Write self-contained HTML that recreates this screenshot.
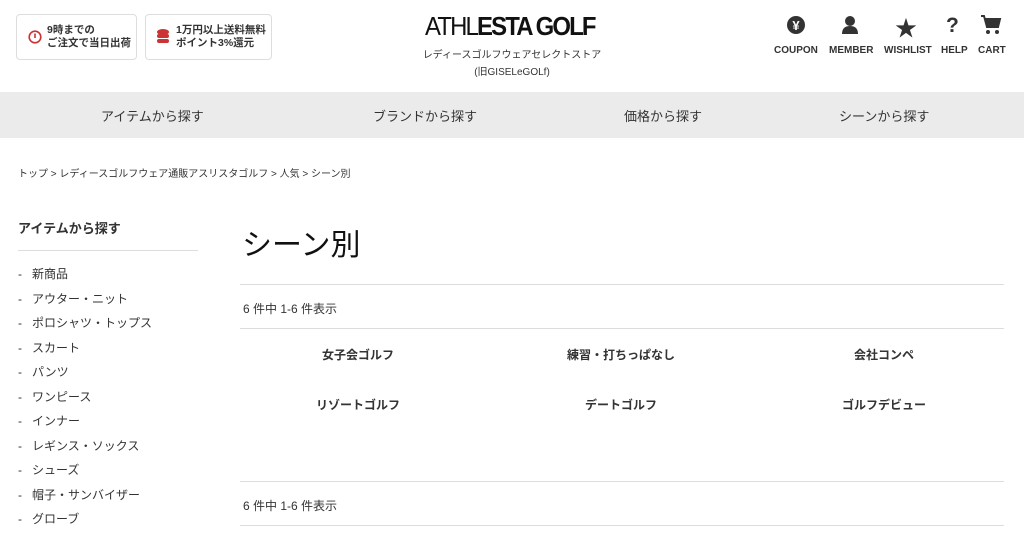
<!DOCTYPE html>
<html><head><meta charset="utf-8"><style>
*{margin:0;padding:0;box-sizing:border-box}
body{width:1024px;height:535px;overflow:hidden;background:#fff;font-family:"Liberation Sans","Noto Sans CJK JP",sans-serif;color:#333;position:relative}
.a{position:absolute}
.box{position:absolute;top:14px;height:46px;border:1px solid #ddd;border-radius:4px;font-size:10.5px;line-height:13px;color:#333;font-weight:bold}
.box .t{position:absolute;left:30px;top:9px}
.icn{position:absolute;font-size:10px;font-weight:bold;color:#333;text-align:center}
nav{position:absolute;top:92px;left:0;width:1024px;height:46px;background:#ebebeb}
nav span{position:absolute;top:14px;font-size:13px;color:#333}
.side li{list-style:none;position:absolute;left:18px;font-size:12px;color:#333}
.line{position:absolute;height:1px;background:#ddd}
.sc{position:absolute;font-size:12px;font-weight:bold;color:#333;width:200px;text-align:center}
</style></head><body>
<div class="box" style="left:16px;width:121px">
<svg class="a" style="left:11px;top:15px" width="14" height="14" viewBox="0 0 14 14"><circle cx="7" cy="7" r="5.8" fill="none" stroke="#c33" stroke-width="1.6"/><rect x="6.2" y="3.5" width="1.6" height="4.5" fill="#c33"/></svg>
<div class="t">9時までの<br>ご注文で当日出荷</div></div>
<div class="box" style="left:145px;width:127px">
<svg class="a" style="left:10px;top:13px" width="14" height="18" viewBox="0 0 14 18"><ellipse cx="7" cy="4" rx="6" ry="3" fill="#c33"/><rect x="1" y="6" width="12" height="4" rx="2" fill="#c33"/><rect x="1" y="11" width="12" height="4" rx="2" fill="#c33"/></svg>
<div class="t">1万円以上送料無料<br>ポイント3%還元</div></div>
<div class="a" style="left:425px;top:11px;font-size:26px;letter-spacing:-2px;color:#111;transform:scaleX(0.92);transform-origin:left top;white-space:nowrap"><span style="font-weight:300">ATHL</span><span style="font-weight:bold">ESTA GOLF</span></div>
<div class="a" style="left:380px;top:47px;width:264px;text-align:center;font-size:10px;line-height:17px;color:#333">レディースゴルフウェアセレクトストア<br>(旧GISELeGOLf)</div>
<svg class="a" style="left:786px;top:15px" width="20" height="20" viewBox="0 0 20 20"><circle cx="10" cy="10" r="9" fill="#333"/><text x="10" y="15" font-size="13" font-weight="bold" fill="#fff" text-anchor="middle">¥</text></svg>
<svg class="a" style="left:841px;top:15px" width="18" height="20" viewBox="0 0 18 20"><circle cx="9" cy="6" r="5" fill="#333"/><path d="M1 19 Q1 11 9 11 Q17 11 17 19Z" fill="#333"/></svg>
<div class="a" style="left:895px;top:11px;font-size:22px;color:#333">★</div>
<div class="a" style="left:946px;top:14px;font-size:21px;font-weight:bold;color:#333">?</div>
<svg class="a" style="left:980px;top:14px" width="22" height="22" viewBox="0 0 22 22"><path d="M1 2h3l3 11h11l2-8H5" fill="none" stroke="#333" stroke-width="2"/><rect x="6" y="5" width="13" height="8" fill="#333"/><circle cx="8" cy="18" r="2" fill="#333"/><circle cx="17" cy="18" r="2" fill="#333"/></svg>
<div class="icn" style="left:774px;top:45px">COUPON</div>
<div class="icn" style="left:829px;top:45px">MEMBER</div>
<div class="icn" style="left:884px;top:45px">WISHLIST</div>
<div class="icn" style="left:941px;top:45px">HELP</div>
<div class="icn" style="left:978px;top:45px">CART</div>
<nav><span style="left:101px">アイテムから探す</span><span style="left:373px">ブランドから探す</span><span style="left:624px">価格から探す</span><span style="left:839px">シーンから探す</span></nav>
<div class="a" style="left:18px;top:165px;font-size:10px;color:#333">トップ &gt; レディースゴルフウェア通販アスリスタゴルフ &gt; 人気 &gt; シーン別</div>
<div class="a" style="left:18px;top:218px;font-size:13px;font-weight:bold;color:#333">アイテムから探す</div>
<div class="line" style="left:18px;top:250px;width:180px"></div>
<ul class="side">
<li style="top:265px">-&nbsp;&nbsp; 新商品</li><li style="top:290px">-&nbsp;&nbsp; アウター・ニット</li><li style="top:314px">-&nbsp;&nbsp; ポロシャツ・トップス</li><li style="top:339px">-&nbsp;&nbsp; スカート</li><li style="top:363px">-&nbsp;&nbsp; パンツ</li><li style="top:388px">-&nbsp;&nbsp; ワンピース</li><li style="top:412px">-&nbsp;&nbsp; インナー</li><li style="top:437px">-&nbsp;&nbsp; レギンス・ソックス</li><li style="top:461px">-&nbsp;&nbsp; シューズ</li><li style="top:486px">-&nbsp;&nbsp; 帽子・サンバイザー</li><li style="top:510px">-&nbsp;&nbsp; グローブ</li>
</ul>
<div class="a" style="left:242px;top:220px;font-size:30px;color:#111">シーン別</div>
<div class="line" style="left:240px;top:284px;width:764px"></div>
<div class="a" style="left:243px;top:300px;font-size:12px">6 件中 1-6 件表示</div>
<div class="line" style="left:240px;top:328px;width:764px"></div>
<div class="sc" style="left:258px;top:346px">女子会ゴルフ</div>
<div class="sc" style="left:521px;top:346px">練習・打ちっぱなし</div>
<div class="sc" style="left:784px;top:346px">会社コンペ</div>
<div class="sc" style="left:258px;top:396px">リゾートゴルフ</div>
<div class="sc" style="left:521px;top:396px">デートゴルフ</div>
<div class="sc" style="left:784px;top:396px">ゴルフデビュー</div>
<div class="line" style="left:240px;top:481px;width:764px"></div>
<div class="a" style="left:243px;top:497px;font-size:12px">6 件中 1-6 件表示</div>
<div class="line" style="left:240px;top:525px;width:764px"></div>
</body></html>
